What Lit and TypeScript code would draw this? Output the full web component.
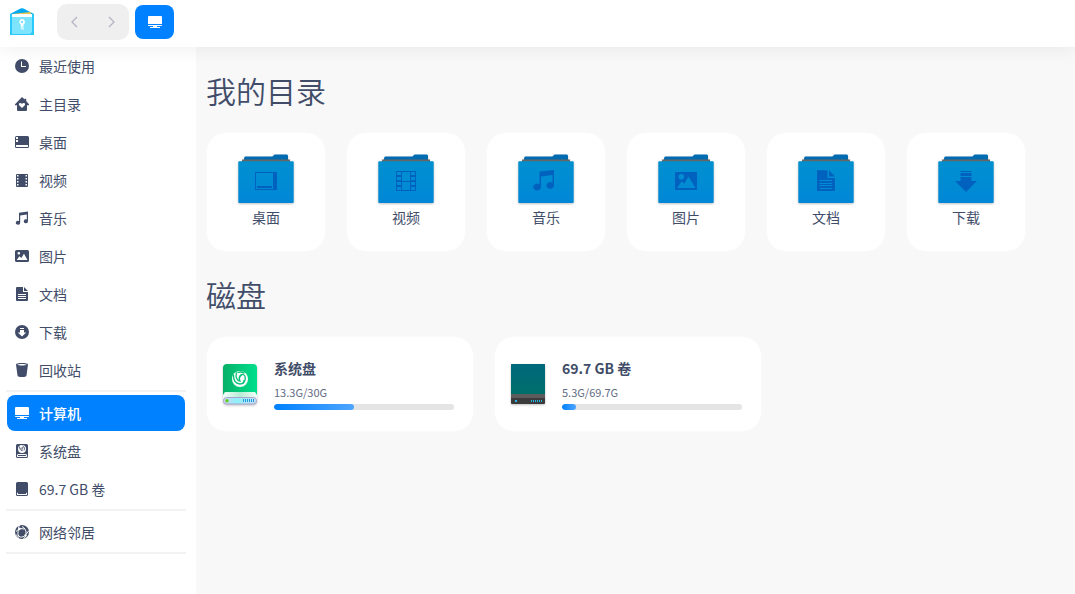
import { LitElement, html, svg, css, type SVGTemplateResult } from "lit";
import { customElement, property } from "lit/decorators.js";
import { classMap } from "lit/directives/class-map.js";

type Glyph = SVGTemplateResult;

/* 14 x 14 monochrome glyphs for the sidebar; holes are cut with evenodd. */
const small: Record<string, Glyph> = {
  recent: svg`<path fill-rule="evenodd" d="M7 0a7 7 0 1 1 0 14A7 7 0 0 1 7 0ZM6 2.500V8h5V7H7V2.500Z"/>`,
  home: svg`<path fill-rule="evenodd" d="M7 0l2.600 2.500V1.800h1.600v2.300L14 7.300v.9h-2V13a1 1 0 0 1-1 1H3a1 1 0 0 1-1-1V8.200H0v-.9ZM7 11l2.600-2.500c1-1.200.4-2.500-.8-2.500-.8 0-1.400.4-1.800 1-.4-.6-1-1-1.800-1-1.200 0-1.800 1.300-.8 2.500Z"/>`,
  desktop: svg`<path fill-rule="evenodd" d="M1.500 1h11A1.500 1.500 0 0 1 14 2.500v9a1.500 1.500 0 0 1-1.500 1.500h-11A1.500 1.500 0 0 1 0 11.500v-9A1.500 1.500 0 0 1 1.500 1ZM1 2v2h2V2ZM1 5v2h2V5ZM1 10v1.500c0 .3.200.5.500.5h11c.3 0 .5-.2.500-.5V10Z"/>`,
  video: svg`<path fill-rule="evenodd" d="M2 1h10a1 1 0 0 1 1 1v11a1 1 0 0 1-1 1H2a1 1 0 0 1-1-1V2a1 1 0 0 1 1-1ZM2 2v1.500h1.500V2ZM2 5v1.500h1.500V5ZM2 8v1.500h1.500V8ZM2 11v1.500h1.500V11ZM10.500 2v1.500H12V2ZM10.500 5v1.500H12V5ZM10.500 8v1.500H12V8ZM10.500 11v1.500H12V11Z"/>`,
  music: svg`<path d="M4 1.700 13 .5v9.800a2.100 1.900 0 1 1-1.200-1.700V3.600L5.200 4.500v7.300A2.200 1.900 0 1 1 4 10.100Z"/>`,
  picture: svg`<path fill-rule="evenodd" d="M1.500 1h11A1.500 1.500 0 0 1 14 2.500v9a1.500 1.500 0 0 1-1.500 1.500h-11A1.500 1.500 0 0 1 0 11.500v-9A1.500 1.500 0 0 1 1.500 1ZM3.800 3a1.300 1.300 0 1 0 0 2.600 1.300 1.300 0 0 0 0-2.600ZM1.700 11h10.800L9 4.800 6.300 9 4.400 7.200Z"/>`,
  document: svg`<path fill-rule="evenodd" d="M2 0h6v5h5v8a1 1 0 0 1-1 1H2a1 1 0 0 1-1-1V1a1 1 0 0 1 1-1ZM9 0l4 4H9ZM3 7v1h8V7ZM3 9v1h8V9ZM3 11v1h8v-1Z"/>`,
  download: svg`<path fill-rule="evenodd" d="M7 0a7 7 0 1 1 0 14A7 7 0 0 1 7 0ZM5 3v1h4V3ZM5 5v2.500H2.800L7 11.500l4.200-4H9V5Z"/>`,
  trash: svg`<path fill-rule="evenodd" d="M1 1.500C1 .5 3.500 0 7 0s6 .5 6 1.500L11.500 12.500C11.300 13.500 9.500 14 7 14s-4.300-.5-4.500-1.500ZM2.200 1.700C3 2.200 4.700 2.500 7 2.500s4-.3 4.800-.8C11 1.200 9.300 1 7 1s-4 .2-4.800.7Z"/>`,
  computer: svg`<path d="M1.300 1h11.400c.8 0 1.300.5 1.300 1.300V9H0V2.300C0 1.500.5 1 1.300 1ZM0 10h14v.3c0 .5-.3.700-.7.700H.7C.3 11 0 10.800 0 10.300ZM5 11h4v1h3v1H2v-1h3Z"/>`,
  system: svg`<path fill-rule="evenodd" d="M2.500 0h9A1.500 1.500 0 0 1 13 1.500v11a1.500 1.500 0 0 1-1.500 1.500h-9A1.500 1.500 0 0 1 1 12.500v-11A1.500 1.500 0 0 1 2.500 0ZM7 1a4 4 0 1 0 0 8 4 4 0 0 0 0-8ZM2 11v1.500c0 .3.200.5.500.5h9c.3 0 .5-.2.500-.5V11l-1-1H3ZM3 11h8v1H3Z"/><path d="M4.500 2.500c0 2.500 1 4 2.800 4.300C6.500 5.500 7 4.300 8.300 3.700 6.500 3.500 5.600 4.200 5.600 5.300M7.500 1.800C9.500 2.500 10 4.500 9 6.500" fill="none" stroke="currentColor" stroke-width=".8"/>`,
  volume: svg`<path fill-rule="evenodd" d="M2.500 0h9A1.500 1.500 0 0 1 13 1.500v11a1.500 1.500 0 0 1-1.500 1.500h-9A1.500 1.500 0 0 1 1 12.500v-11A1.500 1.500 0 0 1 2.500 0ZM2 10.500v2c0 .3.200.5.500.5h9c.3 0 .5-.2.500-.5v-2l-1 .5v1H3v-1Z"/>`,
  network: svg`<circle cx="7" cy="7" r="7"/><g fill="none" stroke="#fff" stroke-width="1"><path d="M5 0C3.500 1.500 3 3 3.800 4.500M7 1.500C9.500 2.500 11.500 5 11 9.500M1 6.500 4.500 3.500 9.500 4M4 5c-1.500 2-1.500 4.500 0 6.500 1.800.8 3.500.7 5.500-.3M.8 9.500 4 12.500M10.500 11.500 8.500 14M11 9.500 13.500 6"/></g><circle cx="4.500" cy="3.700" r="1.200" fill="#fff"/><circle cx="10.500" cy="10.500" r="1.200" fill="#fff"/>`,
};

/* Emblems pressed into the folder front, on the folder's 56 x 52 grid. */
const emblems: Record<string, Glyph> = {
  desktop: svg`<path fill-rule="evenodd" d="M17 19h22v18H17ZM18 20v16h17V20ZM19 33h15v2H19Z"/>`,
  video: svg`<path fill-rule="evenodd" d="M18 18h20v20H18ZM19 19v3h4v-3ZM19 24v3h4v-3ZM19 29v3h4v-3ZM19 34v3h4v-3ZM24 19v9h8v-9ZM24 29v8h8v-8ZM33 19v3h4v-3ZM33 24v3h4v-3ZM33 29v3h4v-3ZM33 34v3h4v-3Z"/>`,
  music: svg`<path d="M21.500 18.500 36 17v15.500a3.800 3.300 0 1 1-1.500-2.700V22L23 23.500V34a3.900 3.500 0 1 1-1.500-2.700Z"/>`,
  picture: svg`<path fill-rule="evenodd" d="M17 19h22v18H17ZM23.300 21a2.800 2.800 0 1 0 0 5.600 2.800 2.800 0 0 0 0-5.600ZM19 35h18.500L30.500 23.500 26 31l-2-3Z"/>`,
  document: svg`<path fill-rule="evenodd" d="M19 17.300h10.500V25H37v13H19ZM31 17.300 37 23.500h-6ZM21.500 27v1h12.500v-1ZM21.500 30v1h12.500v-1ZM21.500 32v1h12.500v-1ZM21.500 35v1h12.500v-1Z"/>`,
  download: svg`<path d="M22.500 18h11v1h-11ZM22.500 20h11V23h-11ZM22.500 24h11v4H39l-11 11L17 28h5.500Z"/>`,
};

const sidebarGroups = [
  [
    ["recent", "最近使用"],
    ["home", "主目录"],
    ["desktop", "桌面"],
    ["video", "视频"],
    ["music", "音乐"],
    ["picture", "图片"],
    ["document", "文档"],
    ["download", "下载"],
    ["trash", "回收站"],
  ],
  [
    ["computer", "计算机"],
    ["system", "系统盘"],
    ["volume", "69.7 GB 卷"],
  ],
  [["network", "网络邻居"]],
];

const directories = [
  ["desktop", "桌面"],
  ["video", "视频"],
  ["music", "音乐"],
  ["picture", "图片"],
  ["document", "文档"],
  ["download", "下载"],
];

@customElement("fm-folder")
export class FmFolder extends LitElement {
  @property() kind = "";
  @property() label = "";

  static styles = css`
    :host {
      display: block;
    }
    .card {
      box-sizing: border-box;
      display: flex;
      flex-direction: column;
      align-items: center;
      gap: 2px;
      width: 120px;
      height: 120px;
      padding-top: 20px;
      border: 1px solid #fafafa;
      border-radius: 20px;
      background: #fff;
      color: inherit;
      text-decoration: none;
      line-height: 20px;
    }
    .folder {
      display: block;
      width: 56px;
      height: 52px;
      overflow: visible;
      filter: drop-shadow(0 1px 1px rgba(0, 0, 0, 0.25));
    }
  `;

  render() {
    return html`
      <a class="card" href="#${this.kind}">
        <svg class="folder" viewBox="0 0 56 52" aria-hidden="true">
          <defs>
            <linearGradient id="front" x1="0" y1="0" x2="0" y2="1">
              <stop offset="0" stop-color="#0090d0" />
              <stop offset="1" stop-color="#0087d6" />
            </linearGradient>
          </defs>
          <path fill="#006bb0" d="M7 3.500h27.500L36.500 1.500H49l1 1V7H6V5Z" />
          <path fill="#666" d="M4 6.500h48V9H4Z" />
          <rect x=".3" y="8.300" width="55.400" height="41.700" rx="1" fill="url(#front)" />
          <g fill="#0062be">${emblems[this.kind]}</g>
        </svg>
        <span>${this.label}</span>
      </a>
    `;
  }
}

@customElement("fm-disk")
export class FmDisk extends LitElement {
  @property() label = "";
  @property({ type: Number }) used = 0;
  @property({ type: Number }) total = 1;
  @property({ type: Boolean }) system = false;

  static styles = css`
    :host {
      display: block;
    }
    .card {
      box-sizing: border-box;
      display: flex;
      align-items: center;
      gap: 17px;
      width: 268px;
      height: 96px;
      padding: 0 19px 0 16px;
      border: 1px solid #fafafa;
      border-radius: 20px;
      background: #fff;
      color: inherit;
      text-decoration: none;
    }
    .drive {
      flex: none;
      width: 34px;
      height: 40px;
      overflow: visible;
      filter: drop-shadow(0 1px 1px rgba(0, 0, 0, 0.25));
    }
    .info {
      flex: 1;
      display: flex;
      flex-direction: column;
    }
    .name {
      font-weight: 700;
      line-height: 20px;
    }
    .usage {
      margin: 6px 0 4px;
      color: #5f6b84;
      font-size: 11px;
      line-height: 16px;
    }
    .bar {
      appearance: none;
      display: block;
      width: 100%;
      height: 6px;
      border: 0;
      border-radius: 3px;
      background: #e5e5e5;
      overflow: hidden;
    }
    .bar::-webkit-progress-bar {
      border-radius: 3px;
      background: #e5e5e5;
    }
    .bar::-webkit-progress-value {
      border-radius: 3px;
      background: linear-gradient(90deg, #0081ff, #4ea5ff);
    }
  `;

  private systemDrive() {
    return html`
      <svg class="drive" viewBox="0 0 34 40" aria-hidden="true">
        <defs>
          <linearGradient id="body">
            <stop offset="0" stop-color="#07b068" />
            <stop offset="1" stop-color="#00df8c" />
          </linearGradient>
          <linearGradient id="lip">
            <stop offset="0" stop-color="#f2fff9" />
            <stop offset=".5" stop-color="#b8ecd6" />
            <stop offset="1" stop-color="#f2fff9" />
          </linearGradient>
          <linearGradient id="base">
            <stop offset="0" stop-color="#d6d3f2" />
            <stop offset=".4" stop-color="#8ff0fa" />
            <stop offset="1" stop-color="#c9dcf7" />
          </linearGradient>
        </defs>
        <path fill="url(#body)" d="M4 0h26a4 4 0 0 1 4 4v32H0V4a4 4 0 0 1 4-4Z" />
        <path fill="url(#lip)" d="M2 28h30l2 3v5H0v-5Z" />
        <rect x=".5" y="33.500" width="33" height="6.500" rx="3" fill="url(#base)" stroke="#a9a6cf" />
        <circle cx="4" cy="36.700" r="1.700" fill="#5fd01c" />
        <path stroke="#1f9be0" stroke-width="1" d="M20.500 35v3M22.500 35v3M24.500 35v3M26.500 35v3M28.500 35v3M30.500 35v3" />
        <circle cx="17" cy="15" r="8" fill="#fff" />
        <g fill="none" stroke="#08c178" stroke-width="1.300" stroke-linecap="round">
          <path d="M10.500 11c-.2 5 2 8.500 6.500 9 2.500 0 4-1.700 4-3.700" />
          <path d="M13.500 8.800c-1.200 4 .3 7.800 3.500 8.200-1.500-2.500-.5-5 2-6.500" />
          <path d="M16.500 13.500c.5-2.500 2.500-3.500 4-3 2.500 1.500 2.500 6-.5 9" />
          <path d="M15 8.500c2-.7 4.500-.5 6 .5" />
        </g>
      </svg>
    `;
  }

  private dataDrive() {
    return html`
      <svg class="drive" viewBox="0 0 34 40" aria-hidden="true">
        <defs>
          <linearGradient id="teal" x1="0" y1="0" x2="0" y2="1">
            <stop offset="0" stop-color="#00687c" />
            <stop offset="1" stop-color="#006f6b" />
          </linearGradient>
        </defs>
        <rect width="34" height="40" rx="1" fill="#3b3b3b" />
        <path fill="url(#teal)" d="M1 0h32l1 1v29H0V1Z" />
        <path fill="#5c5c5c" d="M0 30h34v4H0Z" />
        <path fill="#25b5e6" d="M4 36h2v2H4ZM20 36h1v2h-1ZM22 36h1v2h-1ZM24 36h1v2h-1ZM26 36h1v2h-1ZM28 36h1v2h-1ZM30 36h1v2h-1Z" />
      </svg>
    `;
  }

  render() {
    return html`
      <a class="card" href="#disk">
        ${this.system ? this.systemDrive() : this.dataDrive()}
        <span class="info">
          <span class="name">${this.label}</span>
          <span class="usage">${this.used}G/${this.total}G</span>
          <progress class="bar" max=${this.total} .value=${this.used} aria-label=${this.label}></progress>
        </span>
      </a>
    `;
  }
}

@customElement("app-root")
export class AppRoot extends LitElement {
  static styles = css`
    :host {
      display: flex;
      flex-direction: column;
      min-height: 100vh;
      background: #f8f8f8;
      color: #414d68;
      font-family: "Noto Sans CJK SC", sans-serif;
      font-size: 14px;
    }
    .topbar {
      position: relative;
      display: flex;
      align-items: center;
      box-sizing: border-box;
      height: 47px;
      padding: 0 10px 3px;
      background: #fff;
      box-shadow: 0 0 20px rgba(0, 0, 0, 0.08);
    }
    .logo {
      width: 24px;
      height: 28px;
      margin-right: 23px;
    }
    .history {
      display: flex;
      margin-right: 6px;
      border-radius: 10px;
      background: #efefef;
    }
    button {
      display: flex;
      align-items: center;
      justify-content: center;
      padding: 0;
      border: 0;
      background: none;
    }
    .step {
      width: 36px;
      height: 36px;
      color: #b4b4c4;
    }
    .place {
      width: 39px;
      height: 34px;
      border-radius: 8px;
      background: #0081ff;
      color: #fff;
    }
    .glyph {
      display: block;
      flex: none;
      width: 14px;
      height: 14px;
      fill: currentColor;
    }
    .body {
      flex: 1;
      display: flex;
    }
    .sidebar {
      flex: none;
      box-sizing: border-box;
      width: 196px;
      padding: 0 10px 0 6px;
      background: #fff;
    }
    .group {
      display: flex;
      flex-direction: column;
      gap: 2px;
      padding: 1px 0 2px;
      margin-bottom: 2px;
      border-bottom: 2px solid #f2f2f2;
    }
    .row {
      display: flex;
      align-items: center;
      gap: 10px;
      height: 36px;
      margin: 0 1px;
      padding-left: 8px;
      border-radius: 8px;
      color: inherit;
      text-decoration: none;
      line-height: 20px;
    }
    .active {
      background: #0081ff;
      color: #fff;
      font-weight: 500;
    }
    .content {
      flex: 1;
      min-width: 0;
      padding: 1px 10px 20px;
    }
    .title {
      margin: 20px 0;
      font-size: 30px;
      font-weight: 350;
      line-height: 44px;
    }
    .cards {
      display: flex;
      flex-wrap: wrap;
      gap: 20px;
    }
  `;

  private glyph(name: string) {
    return html`<svg class="glyph" viewBox="0 0 14 14" aria-hidden="true">${small[name]}</svg>`;
  }

  render() {
    return html`
      <header class="topbar">
        <svg class="logo" viewBox="0 0 24 28" aria-hidden="true">
          <path fill="#00a9f0" d="M0 6 10.500.6a3 3 0 0 1 3 0L24 6v4H0Z" />
          <path fill="#29c9fb" d="M0 6h24v21H0Z" />
          <path fill="#e8c658" d="M2 6l18.500-2 .5 2v3H2Z" />
          <path fill="#fff" d="M2 6h20v4H2Z" />
          <path fill="#7ee3fd" d="M2 9h20v15l-2 2H2Z" />
          <path fill="#fff" fill-rule="evenodd" d="M12 11a3 3 0 0 1 1.500 5.600V22h-1v-4h-.7v3h-1v-4.400A3 3 0 0 1 12 11Zm0 1.700a1.200 1.200 0 1 0 0 2.400 1.200 1.200 0 0 0 0-2.400Z" />
        </svg>
        <div class="history">
          <button class="step" type="button" aria-label="后退">
            <svg class="glyph" viewBox="0 0 14 14"><path fill="none" stroke="currentColor" stroke-width="1.300" d="M9 2 4 7l5 5" /></svg>
          </button>
          <button class="step" type="button" aria-label="前进">
            <svg class="glyph" viewBox="0 0 14 14"><path fill="none" stroke="currentColor" stroke-width="1.300" d="M5 2l5 5-5 5" /></svg>
          </button>
        </div>
        <button class="place" type="button" aria-label="计算机">${this.glyph("computer")}</button>
      </header>
      <div class="body">
        <nav class="sidebar">
          ${sidebarGroups.map(
            (group) => html`
              <div class="group">
                ${group.map(
                  ([icon, label]) => html`
                    <a class=${classMap({ row: true, active: icon === "computer" })} href="#${icon}">
                      ${this.glyph(icon)}<span>${label}</span>
                    </a>
                  `
                )}
              </div>
            `
          )}
        </nav>
        <main class="content">
          <h2 class="title">我的目录</h2>
          <div class="cards">
            ${directories.map(([kind, label]) => html`<fm-folder kind=${kind} label=${label}></fm-folder>`)}
          </div>
          <h2 class="title">磁盘</h2>
          <div class="cards">
            <fm-disk label="系统盘" used="13.3" total="30" system></fm-disk>
            <fm-disk label="69.7 GB 卷" used="5.3" total="69.7"></fm-disk>
          </div>
        </main>
      </div>
    `;
  }
}
